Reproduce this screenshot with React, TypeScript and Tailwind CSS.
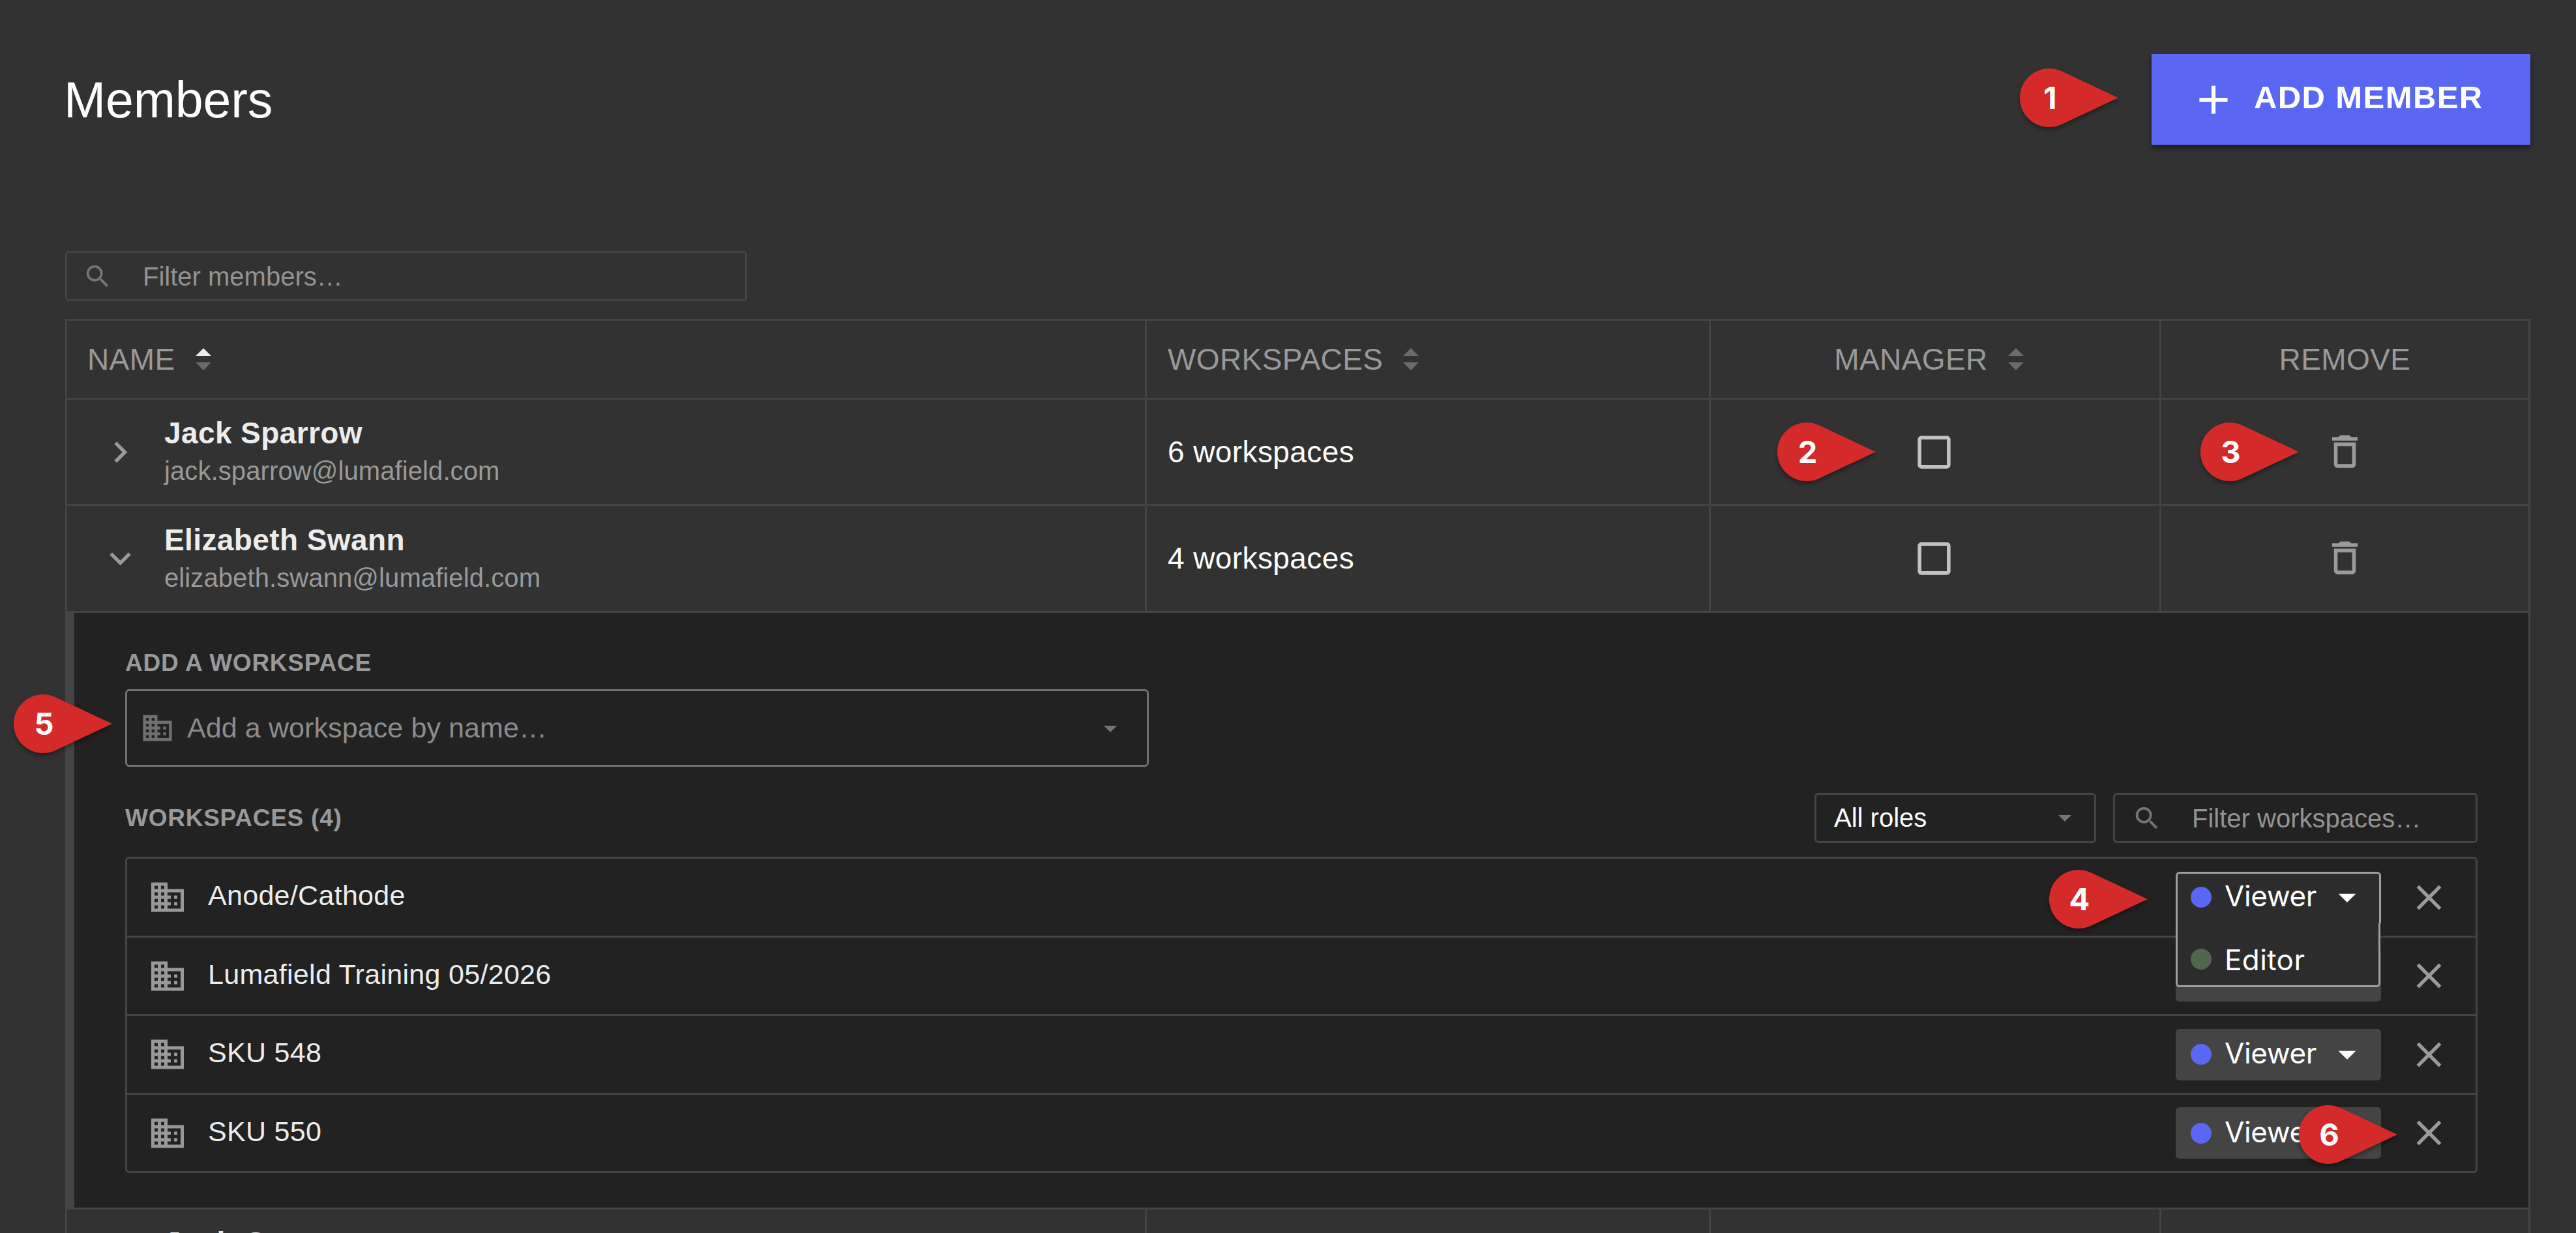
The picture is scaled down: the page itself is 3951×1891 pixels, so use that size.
import { useState } from "react";
import clsx from "clsx";

const ICONS = {
  add: "M19 13h-6v6h-2v-6H5v-2h6V5h2v6h6v2z",
  search:
    "M15.5 14h-.79l-.28-.27A6.471 6.471 0 0 0 16 9.5 6.5 6.5 0 1 0 9.5 16c1.61 0 3.09-.59 4.23-1.57l.27.28v.79l5 4.99L20.49 19l-4.99-5zm-6 0C7.01 14 5 11.99 5 9.5S7.01 5 9.5 5 14 7.01 14 9.5 11.99 14 9.5 14z",
  chevronRight: "M10 6 8.59 7.41 13.17 12l-4.58 4.59L10 18l6-6z",
  expandMore: "M16.59 8.59 12 13.17 7.41 8.59 6 10l6 6 6-6z",
  caret: "m7 10 5 5 5-5z",
  close:
    "M19 6.41 17.59 5 12 10.59 6.41 5 5 6.41 10.59 12 5 17.59 6.41 19 12 13.41 17.59 19 19 17.59 13.41 12z",
  trash:
    "M16 9v10H8V9h8m-1.5-6h-5l-1 1H5v2h14V4h-3.5l-1-1zM18 7H6v12c0 1.1.9 2 2 2h8c1.1 0 2-.9 2-2V7z",
  checkbox:
    "M19 5v14H5V5h14m0-2H5c-1.1 0-2 .9-2 2v14c0 1.1.9 2 2 2h14c1.1 0 2-.9 2-2V5c0-1.1-.9-2-2-2z",
  business:
    "M12 7V3H2v18h20V7H12zM6 19H4v-2h2v2zm0-4H4v-2h2v2zm0-4H4V9h2v2zm0-4H4V5h2v2zm4 12H8v-2h2v2zm0-4H8v-2h2v2zm0-4H8V9h2v2zm0-4H8V5h2v2zm10 12h-8v-2h2v-2h-2v-2h2v-2h-2V9h8v10zm-2-8h-2v2h2v-2zm0 4h-2v2h2v-2z",
};

function Icon({ name, className }: { name: keyof typeof ICONS; className?: string }) {
  return (
    <svg viewBox="0 0 24 24" fill="currentColor" className={clsx("shrink-0", className)}>
      <path d={ICONS[name]} />
    </svg>
  );
}

function SortIcon({ active }: { active?: boolean }) {
  return (
    <svg viewBox="0 0 24 34" className="h-[34px] w-6 shrink-0">
      <path d="M0 12 12 0l12 12z" fill={active ? "#ececec" : "#6b6b6b"} />
      <path d="M0 21.5h24L12 34z" fill="#6b6b6b" />
    </svg>
  );
}

function SearchBox({ placeholder, className }: { placeholder: string; className?: string }) {
  return (
    <div
      className={clsx(
        "flex h-[77px] items-center gap-[46px] rounded-md border-3 border-[#444] pl-6 text-[40px]",
        className,
      )}
    >
      <Icon name="search" className="size-[46px] text-[#757575]" />
      <span className="whitespace-nowrap text-[#939393]">{placeholder}</span>
    </div>
  );
}

const COLS = "grid grid-cols-[1656px_865px_691px_563px]";

type Member = { name: string; email: string; workspaces: number };

const MEMBERS: Member[] = [
  { name: "Jack Sparrow", email: "jack.sparrow@lumafield.com", workspaces: 6 },
  { name: "Elizabeth Swann", email: "elizabeth.swann@lumafield.com", workspaces: 4 },
  { name: "Josh Green", email: "josh.green@lumafield.com", workspaces: 3 },
];

const WORKSPACES = [
  { name: "Anode/Cathode", height: "h-[121px]" },
  { name: "Lumafield Training 05/2026", height: "h-[120px]" },
  { name: "SKU 548", height: "h-[121px]" },
  { name: "SKU 550", height: "h-[117px]" },
];

function MemberRow({
  member,
  open,
  onToggle,
  className,
}: {
  member: Member;
  open: boolean;
  onToggle: () => void;
  className: string;
}) {
  return (
    <div className={clsx(COLS, "border-b-3 border-[#444]", className)}>
      <div className="flex items-center gap-[35px] border-r-3 border-[#444] pl-[49px]">
        <button onClick={onToggle}>
          <Icon name={open ? "expandMore" : "chevronRight"} className="size-[65px] text-[#9a9a9a]" />
        </button>
        <div>
          <div className="text-[46px] leading-[58px] font-bold tracking-[0.4px] text-[#ececec]">
            {member.name}
          </div>
          <div className="text-[40px] leading-[58px] tracking-[0.1px] text-[#999]">
            {member.email}
          </div>
        </div>
      </div>
      <div className="flex items-center border-r-3 border-[#444] pl-8 text-[46px] tracking-[0.4px] text-white">
        {member.workspaces} workspaces
      </div>
      <div className="flex items-center justify-center border-r-3 border-[#444] pr-[3px]">
        <Icon name="checkbox" className="size-[67px] text-[#c2c2c2]" />
      </div>
      <div className="flex items-center justify-center pb-[2px]">
        <Icon name="trash" className="size-[67px] text-[#9a9a9a]" />
      </div>
    </div>
  );
}

function RoleLabel({ role }: { role: "Viewer" | "Editor" }) {
  const viewer = role === "Viewer";
  return (
    <>
      <span
        className={clsx("size-8 shrink-0 rounded-full", viewer ? "bg-[#5a67f2]" : "bg-[#52654f]")}
      />
      <span
        className={clsx(
          "ml-5 font-['Inter',sans-serif] text-[44px] leading-none text-white",
          viewer ? "mb-1 tracking-[-0.4px]" : "mt-[2px] tracking-[0.4px]",
        )}
      >
        {role}
      </span>
    </>
  );
}

function RoleSelect({ open }: { open?: boolean }) {
  return (
    <div className="relative">
      <div
        className={clsx(
          "flex h-[79px] w-[315px] items-center",
          open
            ? "rounded-t-[6px] border-3 border-b-0 border-[#9f9f9f] bg-[#2c2c2c] pr-[17px] pb-[3px] pl-5"
            : "rounded-[6px] bg-[#444] pr-5 pl-[23px]",
        )}
      >
        <RoleLabel role="Viewer" />
        <Icon name="caret" className="ml-auto size-16 text-white" />
      </div>
      {open && (
        <div className="absolute top-[79px] left-0 z-10 flex h-[98px] w-[314px] items-center rounded-b-[6px] border-3 border-t-0 border-[#9f9f9f] bg-[#2c2c2c] pt-4 pl-5">
          <RoleLabel role="Editor" />
        </div>
      )}
    </div>
  );
}

function WorkspacePanel() {
  return (
    <div className="h-[915px] border-b-3 border-l-11 border-b-[#444] border-l-[#444] bg-[#222] px-[78px] pt-[55px]">
      <div className="text-[37px] leading-[44px] font-bold tracking-[0.75px] text-[#999]">
        ADD A WORKSPACE
      </div>
      <div className="mt-[18px] flex h-[119px] w-[1570px] items-center rounded-md border-3 border-[#707070] pr-8 pl-5">
        <Icon name="business" className="size-[53px] text-[#707070]" />
        <span className="ml-[19px] text-[43px] tracking-[0.1px] text-[#8c8c8c]">
          Add a workspace by name…
        </span>
        <Icon name="caret" className="ml-auto size-12 text-[#757575]" />
      </div>

      <div className="mt-10 flex items-center">
        <div className="text-[37px] font-bold tracking-[0.75px] text-[#999]">
          WORKSPACES ({WORKSPACES.length})
        </div>
        <div className="ml-auto flex h-[77px] w-[432px] items-center justify-between rounded-md border-3 border-[#444] pr-[21px] pb-[2px] pl-[27px] text-[40px] text-white">
          All roles
          <Icon name="caret" className="size-12 text-[#757575]" />
        </div>
        <SearchBox placeholder="Filter workspaces…" className="ml-[26px] w-[559px] pl-[26px]" />
      </div>

      <div className="mt-[21px] rounded-md border-3 border-[#444]">
        {WORKSPACES.map((ws, i) => (
          <div
            key={ws.name}
            className={clsx(
              "flex items-center border-[#444] pr-[39px] pl-8",
              ws.height,
              i < WORKSPACES.length - 1 && "border-b-3",
            )}
          >
            <Icon name="business" className="size-[60px] text-[#999]" />
            <span className="mb-[5px] ml-8 text-[43px] tracking-[0.3px] text-[#ececec]">
              {ws.name}
            </span>
            <div className="ml-auto flex items-center gap-[41px]">
              <RoleSelect open={i === 0} />
              <Icon name="close" className="size-[65px] text-[#9b9b9b]" />
            </div>
          </div>
        ))}
      </div>
    </div>
  );
}

// Numbered callout: a teardrop whose tip points right at the control.
function Pin({ n, className }: { n: number; className: string }) {
  return (
    <div className={clsx("absolute z-20 h-[90px] w-[151px]", className)}>
      <svg
        viewBox="0 0 151 90"
        className="absolute inset-0 overflow-visible drop-shadow-[0_4px_3px_rgba(0,0,0,0.35)]"
      >
        <path d="M64.1 4.3A45 45 0 1 0 64.1 85.7L151 45z" fill="#d42a2a" />
      </svg>
      <span className="relative flex h-[90px] w-[93px] items-center justify-center font-['Inter',sans-serif] text-[47px] font-bold text-white">
        {n}
      </span>
    </div>
  );
}

export default function App() {
  const [openRow, setOpenRow] = useState(1);
  const toggle = (i: number) => setOpenRow(openRow === i ? -1 : i);

  return (
    <div className="relative h-[1891px] w-[3951px] overflow-hidden bg-[#323232] pt-[83px] pr-[70px] pl-[100px] font-['Liberation_Sans',Arial,sans-serif]">
      <header className="flex h-[139px] items-center justify-between">
        <h1 className="-ml-[2px] pt-[3px] text-[77px] tracking-[-0.1px] text-white">Members</h1>
        <button className="flex h-[139px] w-[581px] items-center bg-[#5a67f2] pl-[58px] text-white shadow-[0_5px_8px_rgba(0,0,0,0.45)]">
          <Icon name="add" className="size-[74px]" />
          <span className="mb-[6px] ml-[25px] text-[49px] font-bold tracking-[1.4px]">
            ADD MEMBER
          </span>
        </button>
      </header>

      <SearchBox placeholder="Filter members…" className="mt-[163px] w-[1046px]" />

      <div className="mt-[27px] w-[3781px] border-3 border-[#444]">
        <div
          className={clsx(
            COLS,
            "h-[121px] border-b-3 border-[#444] text-[46px] tracking-[0.4px] text-[#999]",
          )}
        >
          <div className="flex items-center gap-[31px] border-r-3 border-[#444] pl-[31px]">
            NAME <SortIcon active />
          </div>
          <div className="flex items-center gap-[31px] border-r-3 border-[#444] pl-8">
            WORKSPACES <SortIcon />
          </div>
          <div className="flex items-center justify-center gap-[31px] border-r-3 border-[#444] pr-[19px]">
            MANAGER <SortIcon />
          </div>
          <div className="flex items-center justify-center">REMOVE</div>
        </div>
        {MEMBERS.map((m, i) => (
          <div key={m.email}>
            <MemberRow
              member={m}
              open={openRow === i}
              onToggle={() => toggle(i)}
              className={i === 1 ? "h-[164px]" : "h-[163px]"}
            />
            {openRow === i && <WorkspacePanel />}
          </div>
        ))}
      </div>

      <Pin n={1} className="top-[105px] left-[3098px]" />
      <Pin n={2} className="top-[648px] left-[2726px]" />
      <Pin n={3} className="top-[648px] left-[3375px]" />
      <Pin n={4} className="top-[1334px] left-[3143px]" />
      <Pin n={5} className="top-[1065px] left-[21px]" />
      <Pin n={6} className="top-[1695px] left-[3526px]" />
    </div>
  );
}
